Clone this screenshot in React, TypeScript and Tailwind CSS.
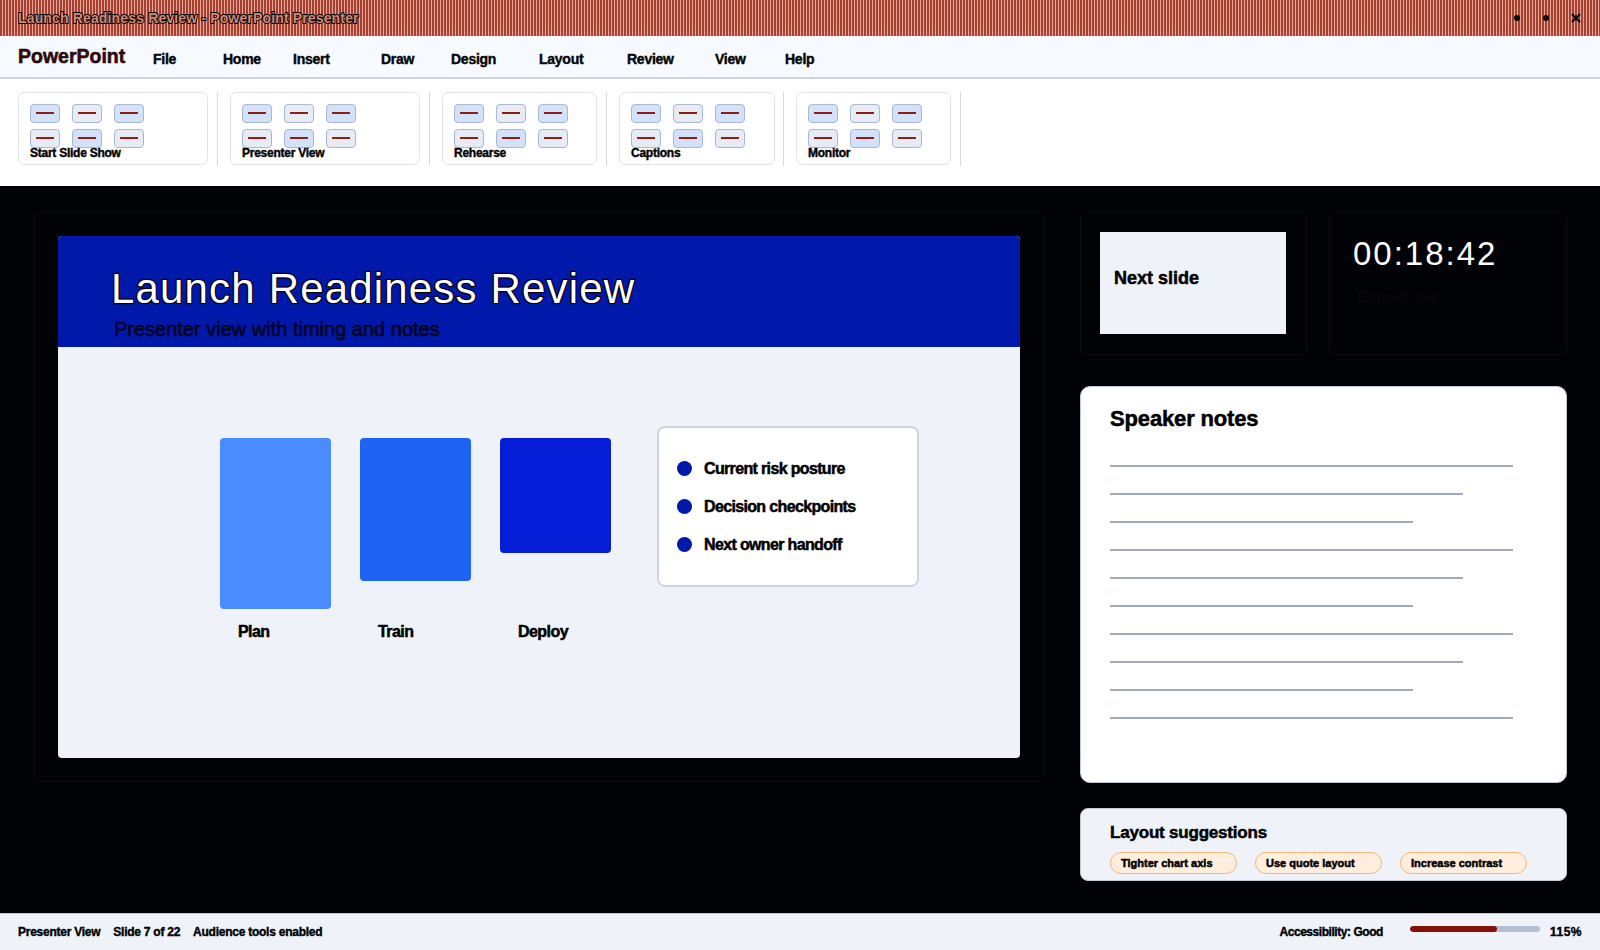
const font = "[font-family:'Liberation_Sans',Arial,sans-serif]";

const ribbon = [
  { label: "Start Slide Show", w: "w-[190px]", gap: "ml-[9px]" },
  { label: "Presenter View", w: "w-[190px]", gap: "ml-[9px]" },
  { label: "Rehearse", w: "w-[155px]", gap: "ml-[9px]" },
  { label: "Captions", w: "w-[156px]", gap: "ml-[8px]" },
  { label: "Monitor", w: "w-[155px]", gap: "ml-[9px]" },
];
const menu = [
  { label: "File", w: "w-[70px]" },
  { label: "Home", w: "w-[70px]" },
  { label: "Insert", w: "w-[88px]" },
  { label: "Draw", w: "w-[70px]" },
  { label: "Design", w: "w-[88px]" },
  { label: "Layout", w: "w-[88px]" },
  { label: "Review", w: "w-[88px]" },
  { label: "View", w: "w-[70px]" },
  { label: "Help", w: "w-[70px]" },
];
const bars = [
  { label: "Plan", h: "h-[171px]", c: "bg-[#4a8cff]" },
  { label: "Train", h: "h-[143px]", c: "bg-[#1f63f5]" },
  { label: "Deploy", h: "h-[115px]", c: "bg-[#051dd6]" },
];
const points = ["Current risk posture", "Decision checkpoints", "Next owner handoff"];
const notes = ["w-[403px]", "w-[353px]", "w-[303px]", "w-[403px]", "w-[353px]", "w-[303px]", "w-[403px]", "w-[353px]", "w-[303px]", "w-[403px]"];

function Tool({ blue }: { blue: boolean }) {
  return (
    <div className={`w-[30px] h-[19px] rounded-[4px] border border-[#a9b8d2] flex items-center justify-center pb-[2px] ${blue ? "bg-[#d3e2fb]" : "bg-[#e6ebf4]"}`}>
      <div className="w-[18px] h-[2px] bg-[#8f1d14]" />
    </div>
  );
}

export default function App() {
  return (
    <div className={`w-[1600px] h-[950px] flex flex-col overflow-hidden bg-[#010205] ${font}`}>
      <header className="h-[36px] shrink-0 flex items-center justify-between pl-[18px] pr-[19px] bg-[repeating-linear-gradient(90deg,#a8402f_0px,#a8402f_2px,#e3a99d_2px,#e3a99d_3px)]">
        <span className="text-[14px] tracking-[0.15px] font-bold text-[#d08a7c] [-webkit-text-stroke:1.8px_#000] [paint-order:stroke_fill]">Launch Readiness Review - PowerPoint Presenter</span>
        <div className="flex items-center gap-[23px]">
          <span className="w-[6px] h-[6px] rounded-full bg-[#08090c]" />
          <span className="w-[6px] h-[6px] rounded-full bg-[#08090c]" />
          <svg width="10" height="10" viewBox="0 0 10 10" className="ml-[-1px]"><path d="M1 1L9 9M9 1L1 9" stroke="#08090c" strokeWidth="2.2" /></svg>
        </div>
      </header>

      <nav className="h-[43px] shrink-0 flex items-center bg-[#f6f9fe] border-b-2 border-[#ccd3df] pl-[18px]">
        <span className="w-[135px] text-[19.5px] leading-[24px] font-bold text-[#3d0808] mb-[2px] [-webkit-text-stroke:0.5px_#000]">PowerPoint</span>
        {menu.map((m) => (
          <span key={m.label} className={`${m.w} text-[14px] tracking-[-0.25px] font-bold text-[#050608] mt-[5px] [-webkit-text-stroke:0.4px_#000]`}>{m.label}</span>
        ))}
      </nav>

      <section className="h-[107px] shrink-0 bg-white flex items-start pl-[18px] pt-[13px]">
        {ribbon.map((g) => (
          <div key={g.label} className="flex items-start">
            <div className={`${g.w} h-[73px] rounded-[6px] border border-[#dfe4ec] bg-white pl-[11px] pt-[11px]`}>
              <div className="grid grid-cols-[30px_30px_30px] gap-x-[12px] gap-y-[6px]">
                {[0, 1, 2, 3, 4, 5].map((n) => (
                  <Tool key={n} blue={n === 0 || n === 2 || n === 4} />
                ))}
              </div>
              <div className="text-[12px] leading-[14px] tracking-[-0.25px] font-bold text-black mt-[-2px] relative [-webkit-text-stroke:0.4px_#000]">{g.label}</div>
            </div>
            <div className={`w-[1px] h-[74px] bg-[#d5dae3] ${g.gap} mr-[12px]`} />
          </div>
        ))}
      </section>

      <main className="flex-1 min-h-0 flex gap-[36px] pl-[34px] pt-[26px]">
        <div className="w-[1010px] h-[570px] rounded-[4px] border border-[#0b0d12] p-[23px]">
          <div className="w-[962px] h-[522px] rounded-[4px] overflow-hidden bg-[#eff3f9]">
            <div className="h-[111px] bg-[#0119ab] pl-[53px] pt-[28px]">
              <div className="text-[42px] leading-[50px] tracking-[1.17px] text-white [-webkit-text-stroke:2.5px_#000] [paint-order:stroke_fill]">Launch Readiness Review</div>
              <div className="text-[20px] leading-[24px] text-[#03093f] ml-[3px] mt-[3px] [-webkit-text-stroke:0.6px_#000]">Presenter view with timing and notes</div>
            </div>
            <div className="flex items-start pl-[162px] pt-[91px]">
              {bars.map((b) => (
                <div key={b.label} className="w-[111px] mr-[29px]">
                  <div className="h-[171px]">
                    <div className={`${b.h} ${b.c} rounded-[4px]`} />
                  </div>
                  <div className="mt-[13px] pl-[18px] text-[16px] leading-[20px] tracking-[-0.55px] font-bold text-black [-webkit-text-stroke:0.5px_#000]">{b.label}</div>
                </div>
              ))}
              <div className="ml-[17px] mt-[-12px] w-[262px] h-[161px] rounded-[8px] bg-white border-2 border-[#cdd4e0] flex flex-col justify-center gap-[18px] pl-[18px]">
                {points.map((p) => (
                  <div key={p} className="flex items-center gap-[12px] h-[20px]">
                    <span className="w-[15px] h-[15px] rounded-full bg-[#0119ab]" />
                    <span className="text-[16px] leading-[20px] tracking-[-0.65px] font-bold text-black [-webkit-text-stroke:0.5px_#000]">{p}</span>
                  </div>
                ))}
              </div>
            </div>
          </div>
        </div>

        <div className="w-[487px] flex flex-col">
          <div className="flex gap-[22px]">
            <div className="w-[227px] h-[143px] rounded-[6px] border border-[#0b0d12] pl-[19px] pt-[19px]">
              <div className="w-[186px] h-[102px] bg-[#eff3f9] flex items-center pl-[14px]">
                <span className="text-[18px] font-bold text-black mb-[10px] [-webkit-text-stroke:0.5px_#000]">Next slide</span>
              </div>
            </div>
            <div className="w-[238px] h-[143px] rounded-[6px] border border-[#0b0d12] pl-[23px] pt-[21px]">
              <div className="text-[33px] leading-[40px] text-white tracking-[2px]">00:18:42</div>
              <div className="text-[14px] leading-[18px] text-[#0a0b10] mt-[14px] ml-[4px]">Elapsed time</div>
            </div>
          </div>

          <div className="mt-[31px] h-[397px] rounded-[10px] bg-white border border-[#c4cad4] pl-[29px] pt-[19px]">
            <div className="text-[22px] leading-[26px] tracking-[-0.15px] font-bold text-black [-webkit-text-stroke:0.5px_#000]">Speaker notes</div>
            <div className="mt-[33px] flex flex-col gap-[26px]">
              {notes.map((w, i) => (
                <div key={i} className={`${w} h-[2px] bg-[#a0a9b8]`} />
              ))}
            </div>
          </div>

          <div className="mt-[25px] h-[73px] rounded-[8px] bg-[#eff3f9] border border-[#c4cad4] pl-[29px] pt-[13px]">
            <div className="text-[17px] leading-[21px] tracking-[-0.2px] font-bold text-black [-webkit-text-stroke:0.5px_#000]">Layout suggestions</div>
            <div className="flex gap-[18px] mt-[9px]">
              {["Tighter chart axis", "Use quote layout", "Increase contrast"].map((c) => (
                <span key={c} className="w-[127px] h-[22px] rounded-full bg-[#ffeedd] border border-[#f5b679] flex items-center pl-[10px] text-[11px] font-bold text-black [-webkit-text-stroke:0.5px_#000]">{c}</span>
              ))}
            </div>
          </div>
        </div>
      </main>

      <footer className="h-[37px] shrink-0 bg-[#eff3f9] border-t border-[#c4cad4] flex items-center pl-[18px] pr-[18px] text-[12px] font-bold text-black [-webkit-text-stroke:0.4px_#000]">
        <div className="flex gap-[13px] tracking-[-0.25px]">
          <span>Presenter View</span>
          <span>Slide 7 of 22</span>
          <span>Audience tools enabled</span>
        </div>
        <span className="ml-auto tracking-[-0.45px]">Accessibility: Good</span>
        <div className="ml-[27px] mb-[7px] w-[130px] h-[6px] rounded-full bg-[#b3bfd2] overflow-hidden">
          <div className="w-[87px] h-full bg-[#861108] rounded-full" />
        </div>
        <span className="ml-[10px] tracking-[0.5px]">115%</span>
      </footer>
    </div>
  );
}
